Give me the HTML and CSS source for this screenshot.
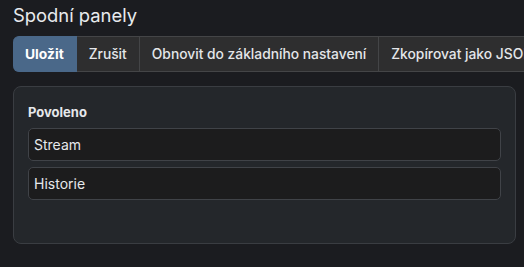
FILE: index.html
```html
<!DOCTYPE html>
<html lang="cs">
<head>
    <meta charset="UTF-8">
    <title>Spodní panely</title>
    <link rel="stylesheet" href="styles.css">
</head>
<body>
    <div class="page">
        <h1>Spodní panely</h1>

        <div class="btn-group">
            <button class="btn primary">Uložit</button>
            <button class="btn">Zrušit</button>
            <button class="btn">Obnovit do základního nastavení</button>
            <button class="btn">Zkopírovat jako JSON</button>
        </div>

        <div class="card">
            <div class="card-label">Povoleno</div>
            <div class="list">
                <div class="list-item">Stream</div>
                <div class="list-item">Historie</div>
            </div>
        </div>
    </div>
</body>
</html>
```

FILE: styles.css
```css
html, body {
    margin: 0;
    background: #1b1c20;
    overflow: hidden;
}
body {
    font-family: Inter, "Noto Sans", sans-serif;
    color: #e6e8eb;
}
.page {
    padding: 3px 8px 0 13px;
}
h1 {
    font-size: 18.4px;
    font-weight: 400;
    margin: 0 0 9px 0;
    line-height: 24px;
    color: #e8eaed;
}
.btn-group {
    display: flex;
    white-space: nowrap;
    width: 600px;
}
.btn {
    font-family: inherit;
    font-size: 13.8px;
    font-weight: 500;
    color: #e4e6e9;
    background: #2e2e2f;
    border: 1px solid #444547;
    border-left: none;
    height: 36px;
    padding: 0 12px;
    margin: 0;
    cursor: pointer;
}
.btn.primary {
    background: #4a6889;
    border-color: #4a6889;
    border-radius: 6px 0 0 6px;
    font-weight: 700;
    color: #fff;
}
.card {
    margin-top: 14px;
    width: 473px;
    height: 126px;
    padding: 16px 14px 14px 14px;
    background: #24272b;
    border: 1px solid #3a3d42;
    border-radius: 8px;
}
.card-label {
    font-size: 13px;
    font-weight: 700;
    line-height: 18px;
    margin-bottom: 7px;
}
.list {
    display: flex;
    flex-direction: column;
    gap: 6px;
}
.list-item {
    height: 31px;
    line-height: 31px;
    padding: 0 5px;
    font-size: 14px;
    background: #1c1c1d;
    border: 1px solid #404348;
    border-radius: 5px;
}
```
